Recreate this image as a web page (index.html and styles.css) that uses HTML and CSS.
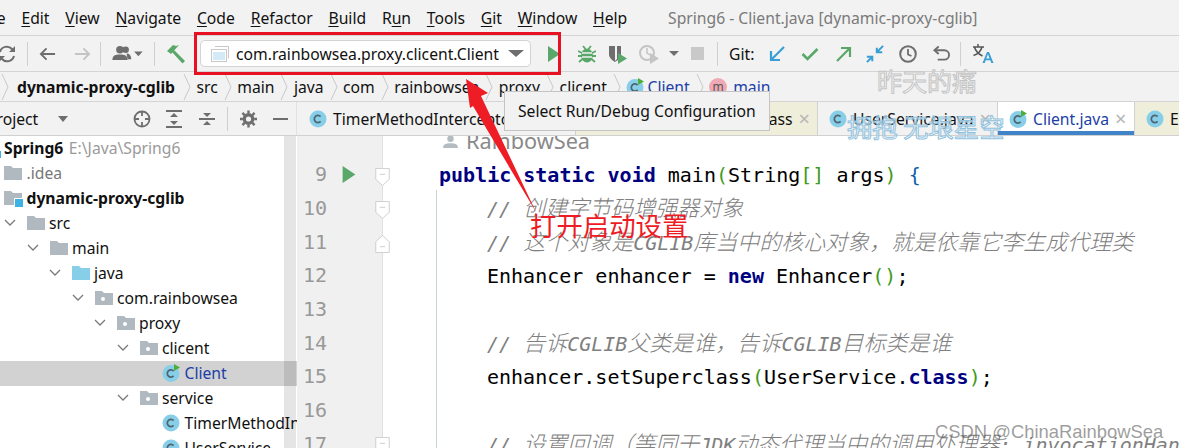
FILE: index.html
```html
<!DOCTYPE html>
<html lang="en">
<head>
<meta charset="utf-8">
<title>Spring6 - Client.java</title>
<link rel="stylesheet" href="styles.css">
</head>
<body>
<svg class="defs" width="0" height="0" aria-hidden="true">
  <symbol id="folder" viewBox="0 0 18 18"><path d="M0 2h7l2 2h9v12H0z" fill="#b0b9bf"/></symbol>
  <symbol id="pkg" viewBox="0 0 18 18"><path d="M0 2h7l2 2h9v12H0z" fill="#b0b9bf"/><circle cx="8" cy="10" r="2" fill="#fff"/></symbol>
  <symbol id="cls" viewBox="0 0 18 18"><circle cx="9" cy="9" r="8.500" fill="#87cfe8"/><path d="M11.600 6.600A3.600 3.600 0 1 0 11.600 11.400" fill="none" stroke="#4f6470" stroke-width="1.700"/></symbol>
  <symbol id="clsrun" viewBox="0 0 18 18"><circle cx="9" cy="9.500" r="8.500" fill="#87cfe8"/><path d="M11.600 7.100A3.600 3.600 0 1 0 11.600 11.900" fill="none" stroke="#4f6470" stroke-width="1.700"/><path d="M12 0l6 3.500-6 3.500z" fill="#4cae3a"/></symbol>
  <symbol id="chev" viewBox="0 0 10 28"><path d="M2 1l6 13-6 13" fill="none" stroke="#c9c9c9" stroke-width="1"/></symbol>
  <symbol id="down" viewBox="0 0 12 8"><path d="M1 1l5 5 5-5" fill="none" stroke="#7a7a7a" stroke-width="1.300"/></symbol>
</svg>

<div class="app">
  <nav class="menu">
    <span class="m first">File</span><span class="m"><u>E</u>dit</span><span class="m"><u>V</u>iew</span><span class="m"><u>N</u>avigate</span><span class="m"><u>C</u>ode</span><span class="m"><u>R</u>efactor</span><span class="m"><u>B</u>uild</span><span class="m">R<u>u</u>n</span><span class="m"><u>T</u>ools</span><span class="m"><u>G</u>it</span><span class="m"><u>W</u>indow</span><span class="m"><u>H</u>elp</span>
    <span class="title">Spring6 - Client.java [dynamic-proxy-cglib]</span>
  </nav>

  <div class="toolbar">
    <svg class="t t-refresh" viewBox="0 0 20 20"><path d="M3 8a7 7 0 0 1 12-3l2 2M17 12a7 7 0 0 1-12 3l-2-2" fill="none" stroke="#6e6e6e" stroke-width="2"/><path d="M18 2v6h-6zM2 18v-6h6z" fill="#6e6e6e"/></svg>
    <i class="sep s1"></i>
    <svg class="t t-back" viewBox="0 0 18 14"><path d="M17 7H2M8 1L2 7l6 6" fill="none" stroke="#6e6e6e" stroke-width="2"/></svg>
    <svg class="t t-fwd" viewBox="0 0 18 14"><path d="M1 7h15M10 1l6 6-6 6" fill="none" stroke="#c4c4c4" stroke-width="2"/></svg>
    <i class="sep s2"></i>
    <svg class="t t-user" viewBox="0 0 32 18"><circle cx="8" cy="5" r="4" fill="#6e6e6e"/><path d="M0 16c0-5 3-6 8-6s8 1 8 6z" fill="#6e6e6e"/><circle cx="14" cy="5" r="3.500" fill="#6e6e6e"/><path d="M15 9c3 0 5 2 5 6h-4z" fill="#6e6e6e"/><path d="M23 7h9l-4.500 5z" fill="#6e6e6e"/></svg>
    <i class="sep s3"></i>
    <svg class="t t-hammer" viewBox="0 0 20 20"><path d="M1 7l6-6 3 1 3-1-8 9z" fill="#59a869"/><path d="M8 6l11 11-2.500 2.500L6 8z" fill="#59a869"/></svg>
    <div class="config">
      <svg class="cfg-ico" viewBox="0 0 18 16"><path d="M4 .5h13.500v12" fill="none" stroke="#c8c8c8"/><rect x=".5" y="3.500" width="15" height="12" fill="#fff" stroke="#c8c8c8"/><rect x="2" y="6" width="12" height="8" fill="#d3ebf7"/></svg>
      <span class="cfg-text">com.rainbowsea.proxy.clicent.Client</span>
      <i class="caret big"></i>
    </div>
    <svg class="t t-run" viewBox="0 0 12 16"><path d="M0 0l12 8-12 8z" fill="#59a869"/></svg>
    <svg class="t t-debug" viewBox="0 0 18 18"><path d="M5 1l2.500 3M13 1l-2.500 3M0 6l4 2M18 6l-4 2M0 11h4M18 11h-4M1 17l3.500-3M17 17l-3.500-3" stroke="#59a869" stroke-width="1.800" fill="none"/><ellipse cx="9" cy="10.500" rx="5.800" ry="7" fill="#59a869"/><path d="M4 8h10M4 12h10" stroke="#f2f2f2" stroke-width="1.500"/></svg>
    <svg class="t t-cover" viewBox="0 0 20 20"><path d="M1 2h12v8c0 4-3 6-6 8-3-2-6-4-6-8z" fill="#6e6e6e"/><path d="M7 2h2v13l-2 2z" fill="#f2f2f2"/><path d="M10 9l9 5.500-9 5.500z" fill="#59a869"/></svg>
    <svg class="t t-prof" viewBox="0 0 22 20"><circle cx="8" cy="9" r="7" fill="none" stroke="#c4c4c4" stroke-width="2"/><path d="M8 4v5l3 2" fill="none" stroke="#c4c4c4" stroke-width="1.500"/><path d="M11 9l9 5.500-9 5.500z" fill="#c4c4c4"/></svg>
    <i class="caret small"></i>
    <i class="stop"></i>
    <i class="sep s4"></i>
    <span class="git">Git:</span>
    <svg class="t t-gup" viewBox="0 0 16 16"><path d="M15 1L3 13M2 5v9h9" fill="none" stroke="#389fd6" stroke-width="2.200"/></svg>
    <svg class="t t-gcheck" viewBox="0 0 18 14"><path d="M1.500 7l5 5 10-10" fill="none" stroke="#59a869" stroke-width="2.600"/></svg>
    <svg class="t t-gpush" viewBox="0 0 16 16"><path d="M1 15L13 3M5 2h9v9" fill="none" stroke="#59a869" stroke-width="2.200"/></svg>
    <svg class="t t-gmerge" viewBox="0 0 20 20"><path d="M19 1l-7 7M12 3v5h6M1 13h6v5M7 13l-6 6" fill="none" stroke="#389fd6" stroke-width="2.200"/></svg>
    <svg class="t t-clock" viewBox="0 0 18 18"><circle cx="9" cy="9" r="7.800" fill="none" stroke="#6e6e6e" stroke-width="2"/><path d="M9 4v5.500l3.500 1.500" fill="none" stroke="#6e6e6e" stroke-width="1.800"/></svg>
    <svg class="t t-undo" viewBox="0 0 18 18"><path d="M2 5h10a4.500 4.500 0 0 1 0 10H5" fill="none" stroke="#6e6e6e" stroke-width="2"/><path d="M6 1L1.500 5 6 9" fill="none" stroke="#6e6e6e" stroke-width="2"/></svg>
    <i class="sep s5"></i>
    <svg class="t t-trans" viewBox="0 0 22 20"><path d="M1 3h11M6 0v3M2.500 3c1 4 4 7 8 9M10 3c-1 4-4 7-8.500 8.500" fill="none" stroke="#555" stroke-width="1.500"/><path d="M15 8l-4.500 11h2.200l1-2.800h4.600l1 2.800h2.200L17 8zM14.300 14.500L15.900 10l1.600 4.500z" fill="#389fd6"/></svg>
  </div>

  <div class="crumbs">
    <svg class="chev c0"><use href="#chev"/></svg>
    <b class="cr bold">dynamic-proxy-cglib</b><svg class="chev"><use href="#chev"/></svg>
    <span class="cr">src</span><svg class="chev"><use href="#chev"/></svg>
    <span class="cr">main</span><svg class="chev"><use href="#chev"/></svg>
    <span class="cr">java</span><svg class="chev"><use href="#chev"/></svg>
    <span class="cr">com</span><svg class="chev"><use href="#chev"/></svg>
    <span class="cr">rainbowsea</span><svg class="chev"><use href="#chev"/></svg>
    <span class="cr">proxy</span><svg class="chev"><use href="#chev"/></svg>
    <span class="cr">clicent</span><svg class="chev"><use href="#chev"/></svg>
    <svg class="ico18"><use href="#clsrun"/></svg><span class="cr blue">Client</span><svg class="chev"><use href="#chev"/></svg>
    <span class="m-ico">m</span><span class="cr blue">main</span>
  </div>

  <div class="tabbar">
    <div class="toolhead">
      <span class="th-title">Project</span><i class="caret th"></i>
      <svg class="th-i i1" viewBox="0 0 18 18"><circle cx="9" cy="9" r="7.500" fill="none" stroke="#6e6e6e" stroke-width="1.800"/><path d="M9 1v5M9 12v5M1 9h5M12 9h5" stroke="#6e6e6e" stroke-width="1.800"/></svg>
      <svg class="th-i i2" viewBox="0 0 16 18"><path d="M0 1h16M0 17h16" stroke="#6e6e6e" stroke-width="2"/><path d="M8 3l4 4H4zM8 15l4-4H4z" fill="#6e6e6e"/></svg>
      <svg class="th-i i3" viewBox="0 0 16 18"><path d="M0 9h16" stroke="#6e6e6e" stroke-width="2"/><path d="M8 7l4-4H4zM8 11l4 4H4z" fill="#6e6e6e"/></svg>
      <i class="sep s6"></i>
      <svg class="th-i i4" viewBox="0 0 18 18"><circle cx="9" cy="9" r="4.500" fill="none" stroke="#6e6e6e" stroke-width="3.500"/><path d="M9 0v3M9 15v3M0 9h3M15 9h3M2.600 2.600l2.200 2.200M13.200 13.200l2.200 2.200M15.400 2.600l-2.200 2.200M4.800 13.200l-2.200 2.200" stroke="#6e6e6e" stroke-width="2.600"/></svg>
      <i class="th-min"></i>
    </div>
    <div class="tab t1"><svg class="ico18"><use href="#cls"/></svg><span>TimerMethodInterceptor.java</span></div>
    <div class="tab t2 yellow"><span class="tab-end">UserServiceCglib.class</span><span class="x">×</span></div>
    <div class="tab t3"><svg class="ico18"><use href="#cls"/></svg><span>UserService.java</span><span class="x">×</span></div>
    <div class="tab t4 active"><svg class="ico18"><use href="#clsrun"/></svg><span>Client.java</span><span class="x">×</span></div>
    <div class="tab t5 yellow"><svg class="ico18"><use href="#cls"/></svg><span>Enhancer.class</span></div>
  </div>

  <div class="body">
    <aside class="tree">
      <div class="rows">
        <div class="row top"><b class="root">Spring6</b><span class="path">E:\Java\Spring6</span></div>
        <div class="row l0"><svg class="ico18"><use href="#folder"/></svg><span class="muted">.idea</span></div>
        <div class="row l0"><span class="mod"><svg class="ico18"><use href="#folder"/></svg><i class="mod-dot"></i></span><b>dynamic-proxy-cglib</b></div>
        <div class="row l1"><svg class="tw"><use href="#down"/></svg><svg class="ico18"><use href="#folder"/></svg><span>src</span></div>
        <div class="row l2"><svg class="tw"><use href="#down"/></svg><svg class="ico18"><use href="#folder"/></svg><span>main</span></div>
        <div class="row l3"><svg class="tw"><use href="#down"/></svg><svg class="ico18 srcroot"><path d="M0 2h7l2 2h9v12H0z" fill="#87cfe8"/></svg><span>java</span></div>
        <div class="row l4"><svg class="tw"><use href="#down"/></svg><svg class="ico18"><use href="#pkg"/></svg><span>com.rainbowsea</span></div>
        <div class="row l5"><svg class="tw"><use href="#down"/></svg><svg class="ico18"><use href="#pkg"/></svg><span>proxy</span></div>
        <div class="row l6"><svg class="tw"><use href="#down"/></svg><svg class="ico18"><use href="#pkg"/></svg><span>clicent</span></div>
        <div class="row l7 sel"><svg class="ico18"><use href="#clsrun"/></svg><span class="blue">Client</span></div>
        <div class="row l6"><svg class="tw"><use href="#down"/></svg><svg class="ico18"><use href="#pkg"/></svg><span>service</span></div>
        <div class="row l7"><svg class="ico18"><use href="#cls"/></svg><span>TimerMethodInterceptor</span></div>
        <div class="row l7"><svg class="ico18"><use href="#cls"/></svg><span>UserService</span></div>
      </div>
      <div class="sb"></div>
    </aside>

    <div class="gutter">
      <div class="ln first"></div>
      <div class="ln"><span class="num">9</span><svg class="gut-run" viewBox="0 0 12 16"><path d="M0 0l12 8-12 8z" fill="#59a869"/></svg><svg class="fold" viewBox="0 0 16 20"><path d="M.5.500h15v12L8 19.500.5 12.500z" fill="#fff" stroke="#c9c9c9"/><path d="M5 7h6" stroke="#c9c9c9"/></svg></div>
      <div class="ln"><span class="num">10</span><svg class="fold" viewBox="0 0 16 20"><path d="M.5.500h15v12L8 19.500.5 12.500z" fill="#fff" stroke="#c9c9c9"/><path d="M5 7h6" stroke="#c9c9c9"/></svg></div>
      <div class="ln"><span class="num">11</span><svg class="fold" viewBox="0 0 16 20"><path d="M.5 19.500h15v-12L8 .5.500 7.500z" fill="#fff" stroke="#c9c9c9"/><path d="M5 13h6" stroke="#c9c9c9"/></svg></div>
      <div class="ln"><span class="num">12</span></div>
      <div class="ln"><span class="num">13</span></div>
      <div class="ln"><span class="num">14</span></div>
      <div class="ln"><span class="num">15</span></div>
      <div class="ln"><span class="num">16</span></div>
      <div class="ln"><span class="num">17</span><svg class="fold" viewBox="0 0 16 20"><path d="M.5.500h15v12L8 19.500.5 12.500z" fill="#fff" stroke="#c9c9c9"/><path d="M5 7h6" stroke="#c9c9c9"/></svg></div>
    </div>

    <main class="editor">
      <div class="hint"><svg class="hint-ico" viewBox="0 0 16 14"><circle cx="8" cy="4" r="3.500" fill="#b5bcc1"/><path d="M0 14c0-4 3-5 8-5s8 1 8 5z" fill="#b5bcc1"/></svg><span>RainbowSea</span></div>
      <div class="code">
        <div class="cl"><span class="kw">public static void</span> main<span class="pg">(</span>String<span class="pg">[]</span> args<span class="pg">)</span> <span class="pb">{</span></div>
        <div class="cl in c"><span class="cmt">// <span class="cn">创建字节码增强器对象</span></span></div>
        <div class="cl in c"><span class="cmt">// <span class="cn">这个对象是</span>CGLIB<span class="cn">库当中的核心对象，就是依靠它李生成代理类</span></span></div>
        <div class="cl in">Enhancer enhancer = <span class="kw">new</span> Enhancer<span class="pg">()</span>;</div>
        <div class="cl in"></div>
        <div class="cl in c"><span class="cmt">// <span class="cn">告诉</span>CGLIB<span class="cn">父类是谁，告诉</span>CGLIB<span class="cn">目标类是谁</span></span></div>
        <div class="cl in">enhancer.setSuperclass<span class="pg">(</span>UserService.<span class="kw">class</span><span class="pg">)</span>;</div>
        <div class="cl in"></div>
        <div class="cl in c"><span class="cmt">// <span class="cn">设置回调（等同于</span>JDK<span class="cn">动态代理当中的调用处理器</span>: invocationHandler</span></div>
      </div>
      <i class="guide"></i>
    </main>
  </div>

  <div class="tooltip">Select Run/Debug Configuration</div>
  <i class="redbox"></i>
  <svg class="arrow" viewBox="0 0 80 140"><path d="M1 1l22 14-7 3 55 116L8 28 5 30z" fill="#ee1c25"/></svg>
  <span class="note">打开启动设置</span>
  <span class="wm wm1">昨天的痛</span>
  <span class="wm wm2">拥抱 无垠星空</span>
  <span class="wm3">CSDN @ChinaRainbowSea</span>
</div>
</body>
</html>
```

FILE: styles.css
```css
* { box-sizing: border-box; }
html, body { margin: 0; height: 100%; }
body { background: #fff; overflow: hidden; }
.defs { position: absolute; }
.app {
  position: relative; width: 1179px; height: 448px; overflow: hidden;
  display: flex; flex-direction: column;
  font-family: "Noto Sans", "Noto Sans CJK SC", sans-serif; font-size: 15.700px; color: #111;
  background: #f2f2f2;
}
i { display: block; font-style: normal; }
b { font-weight: 700; }
svg { flex: none; display: block; }

/* menu */
.menu { height: 36px; flex: none; display: flex; align-items: center; border-bottom: 1px solid #d4d4d4; white-space: nowrap; }
.m { margin-right: 15.800px; }
.m.first { margin-left: -19.500px; }
.m u { text-underline-offset: 2px; text-decoration-thickness: 1px; }
.title { margin-left: 25px; color: #7a7a7a; }

/* toolbar */
.toolbar { height: 36px; flex: none; display: flex; align-items: center; border-bottom: 1px solid #d4d4d4; white-space: nowrap; }
.sep { width: 1px; height: 24px; background: #cfcfcf; }
.t-refresh { width: 20px; height: 20px; margin-left: -3px; }
.s1 { margin-left: 10px; }
.t-back { width: 17px; height: 14px; margin-left: 11px; }
.t-fwd { width: 17px; height: 14px; margin-left: 18px; }
.s2 { margin-left: 9px; }
.t-user { width: 31px; height: 17px; margin-left: 11px; }
.s3 { margin-left: 11px; }
.t-hammer { width: 20px; height: 20px; margin-left: 11px; }
.config {
  width: 331px; height: 27px; margin-left: 14px; flex: none;
  display: flex; align-items: center; background: #fff; border: 1px solid #d3d3d3; border-radius: 5px;
  padding-left: 10px;
}
.cfg-ico { width: 18px; height: 16px; }
.cfg-text { margin-left: 7px; flex: 1; }
.caret { width: 0; height: 0; border-style: solid; border-color: #6e6e6e transparent transparent; }
.caret.big { border-width: 7px 8px 0; margin-right: 6px; }
.t-run { width: 12px; height: 16px; margin-left: 17px; }
.t-debug { width: 18px; height: 18px; margin-left: 18px; }
.t-cover { width: 20px; height: 20px; margin-left: 12px; }
.t-prof { width: 22px; height: 20px; margin-left: 11px; }
.caret.small { border-width: 5px 5px 0; margin-left: 8px; }
.stop { width: 13px; height: 13px; background: #c9c9c9; margin-left: 12px; }
.s4 { margin-left: 13px; }
.git { margin-left: 11px; }
.t-gup { width: 16px; height: 16px; margin-left: 15px; }
.t-gcheck { width: 18px; height: 14px; margin-left: 16px; }
.t-gpush { width: 16px; height: 16px; margin-left: 17px; }
.t-gmerge { width: 18px; height: 18px; margin-left: 14px; }
.t-clock { width: 18px; height: 18px; margin-left: 15px; }
.t-undo { width: 17px; height: 18px; margin-left: 16px; }
.s5 { margin-left: 10px; }
.t-trans { width: 22px; height: 20px; margin-left: 11px; }

/* breadcrumbs */
.crumbs { height: 30px; flex: none; display: flex; align-items: center; border-bottom: 1px solid #d4d4d4; white-space: nowrap; }
.chev { width: 10px; height: 28px; margin: 0 4.500px 0 5px; }
.chev.c0 { margin: 0 7px 0 0; }
.bold { margin-right: 2px; }
.blue { color: #1c3fa8; }
.crumbs .ico18 { margin-right: 3px; }
.m-ico { width: 18px; height: 18px; border-radius: 50%; background: #efa9b5; font-size: 12px; line-height: 17px; text-align: center; margin-right: 6px; color: #555; }
.ico18 { width: 18px; height: 18px; }

/* tabs */
.tabbar { height: 34px; flex: none; display: flex; align-items: stretch; border-bottom: 1px solid #d1d1d1; white-space: nowrap; }
.toolhead { width: 297px; flex: none; display: flex; align-items: center; overflow: hidden; border-right: 1px solid #e2e2e2; }
.th-title { margin-left: -13px; width: 60px; }
.caret.th { border-width: 6px 5px 0; margin-left: 11px; }
.th-i { height: 18px; width: 18px; }
.i1 { margin-left: 65px; }
.i2 { margin-left: 15px; width: 16px; }
.i3 { margin-left: 17px; width: 16px; }
.s6 { margin-left: 12px; }
.i4 { margin-left: 12px; width: 17px; }
.th-min { width: 15px; height: 2px; background: #6e6e6e; margin-left: 16px; }
.tab { display: flex; align-items: center; gap: 6px; padding-left: 11px; flex: none; border-right: 1px solid #d1d1d1; overflow: hidden; }
.t1 { width: 279px; padding-left: 12px; }
.t2 { width: 242px; justify-content: flex-end; padding-right: 7px; }
.t3 { width: 180px; }
.t4 { width: 137px; }
.t5 { flex: 1; border-right: 0; }
.yellow { background: #efeedb; }
.active { background: #fff; color: #1c3fa8; box-shadow: inset 0 -4px 0 #4083c9; }
.x { color: #b5b5b5; font-size: 20px; line-height: 1; margin-left: auto; }
.t2 .x { margin-left: 0; }
.t3 .x, .t4 .x { margin-right: 8px; }

/* tree */
.body { flex: 1; min-height: 0; display: flex; }
.tree { width: 297px; flex: none; background: #fff; display: flex; position: relative; overflow: hidden; }
.rows { flex: 1; min-width: 0; }
.row { height: 25px; padding-bottom: 1px; display: flex; align-items: center; gap: 4.500px; white-space: nowrap; width: 297px; }
.top { position: relative; }
.top::before { content: ""; position: absolute; left: 0; top: 15px; width: 1px; height: 7px; background: #3db3e3; }
.root { margin-left: 4px; }
.path { color: #9a9a9a; margin-left: 1px; }
.muted { color: #777; }
.l0 { padding-left: 4px; }
.l1 { padding-left: 4px; }
.l2 { padding-left: 27px; }
.l3 { padding-left: 49px; }
.l4 { padding-left: 72px; }
.l5 { padding-left: 94px; }
.l6 { padding-left: 117px; }
.l7 { padding-left: 162px; }
.tw { width: 12px; height: 8px; margin-right: 6px; }
.sel { background: #d2d2d2; }
.mod { position: relative; display: block; width: 18px; height: 18px; }
.mod-dot { position: absolute; right: -1px; bottom: 0; width: 8px; height: 8px; background: #3db3e3; outline: 1px solid #fff; }
.sb { position: absolute; right: 1px; top: 0; bottom: 0; width: 12px; background: rgba(0,0,0,.1); }

/* gutter */
.gutter { width: 86px; flex: none; background: #f0f0f0; border-right: 1px solid #e0e0e0; }
.ln { height: 33.700px; display: flex; align-items: center; position: relative; font-family: "DejaVu Sans Mono", monospace; font-size: 20px; color: #999; }
.ln.first { height: 21.500px; }
.num { width: 30px; text-align: right; }
.gut-run { width: 14px; height: 17px; margin-left: 15px; }
.fold { position: absolute; left: 78px; top: 10px; width: 15px; height: 18px; z-index: 1; }

/* editor */
.editor { flex: 1; min-width: 0; overflow: hidden; position: relative; background: #fff; }
.hint { height: 21px; display: flex; align-items: center; gap: 8px; color: #8a8a8a; font-size: 21.700px; line-height: 10px; margin-top: -7px; margin-bottom: 8.500px; padding-left: 60px; padding-top: 3px; }
.hint-ico { width: 15px; height: 13px; }
.code { padding-left: 56px; font-family: "DejaVu Sans Mono", monospace; font-size: 20px; color: #000; }
.cl { height: 33.700px; line-height: 33.700px; white-space: pre; }
.cl.c { line-height: 29px; }
.in { padding-left: 48px; }
.kw { color: #000080; font-weight: 700; }
.pg { color: #3f9b1e; }
.pb { color: #0d5ea8; }
.cmt { color: #808080; font-style: italic; }
.cn { font-family: "Noto Sans CJK SC", sans-serif; font-size: 22px; font-weight: 300; }
.guide { position: absolute; left: 53px; top: 54px; bottom: 0; width: 1px; background: #c9d2d9; }

/* overlays */
.tooltip { position: absolute; left: 504px; top: 91px; width: 266px; height: 40px; padding-left: 13px; line-height: 38px; background: #f2f2f2; border: 1px solid #c4c4c4; }
.redbox { position: absolute; left: 194px; top: 32px; width: 367px; height: 43px; border: 3px solid #e81123; }
.arrow { position: absolute; left: 465px; top: 78px; width: 80px; height: 140px; }
.note { position: absolute; left: 530px; top: 207px; font-family: "Noto Sans CJK SC", sans-serif; font-size: 26.400px; line-height: 36px; color: #ee1c25; }
.wm { position: absolute; font-family: "Noto Sans CJK SC", sans-serif; color: rgba(255,255,255,.5); font-size: 25px; line-height: 34px; white-space: pre; }
.wm1 { left: 877px; top: 63px; -webkit-text-stroke: 1px #c4c4c4; }
.wm2 { left: 847px; top: 109px; font-size: 25.300px; -webkit-text-stroke: 1px #8fc1de; }
.wm3 { position: absolute; left: 935px; top: 422px; font-family: "Liberation Sans", sans-serif; font-size: 18.400px; line-height: 20px; color: rgba(90,90,90,.6); white-space: pre; }
```
